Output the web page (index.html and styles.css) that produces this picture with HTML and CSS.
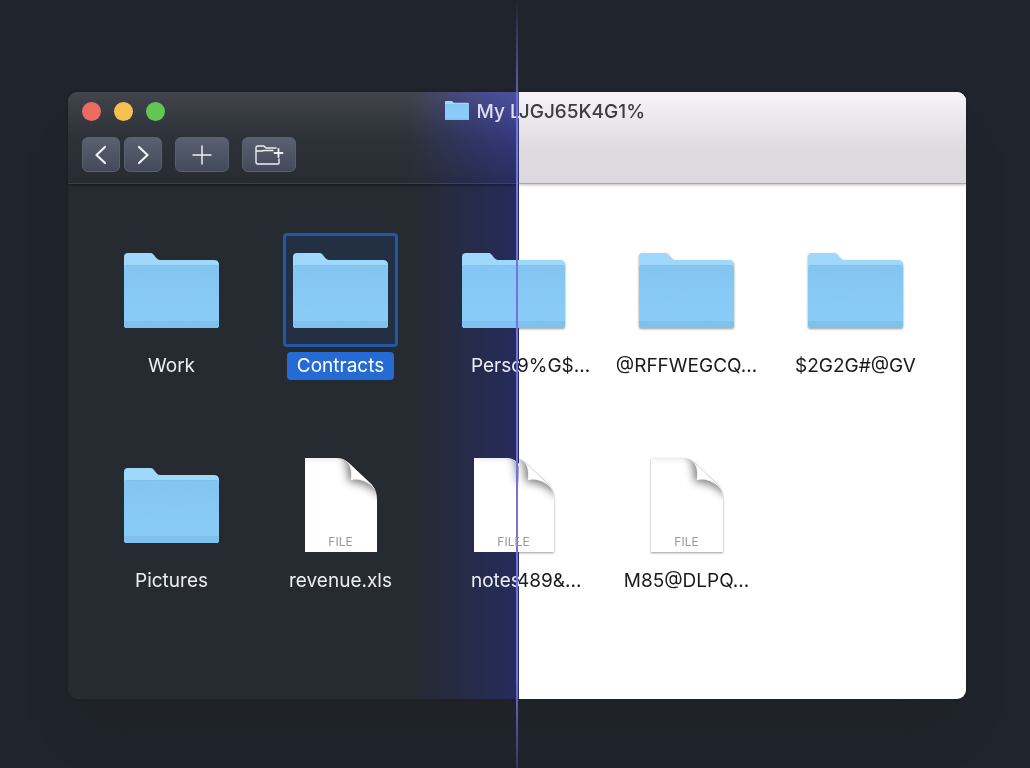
FILE: index.html
```html
<!DOCTYPE html>
<html lang="en">
<head>
<meta charset="utf-8">
<title>My Files</title>
<link rel="stylesheet" href="styles.css">
</head>
<body>
<svg class="defs" aria-hidden="true">
  <defs>
    <linearGradient id="front" x1="0" y1="0" x2="0" y2="1">
      <stop offset="0" stop-color="#83c5f1"/><stop offset="1" stop-color="#8acdf9"/>
    </linearGradient>
    <filter id="soft" x="-50%" y="-50%" width="200%" height="200%"><feGaussianBlur stdDeviation="4"/></filter>
    <filter id="paper"><feTurbulence type="fractalNoise" baseFrequency="0.12" numOctaves="2"/><feColorMatrix values="0 0 0 0 0.3  0 0 0 0 0.6  0 0 0 0 0.85  0.4 0 0 0 -0.08"/><feComposite in2="SourceGraphic" operator="in"/></filter>
    <clipPath id="sheet"><path d="M0 0H32C39 0 43 4 48 9L65 25C70 30 72 34 72 42V94H0Z"/></clipPath>
  </defs>
  <symbol id="folder" viewBox="0 0 95 75">
    <path d="M0 4Q0 0 4 0H27C30 0 32 7 36 7H90Q95 7 95 12V72Q95 75 92 75H3Q0 75 0 72Z" fill="#9fd8fb"/>
    <path d="M0 15Q0 12 3 12H92Q95 12 95 15V72Q95 75 92 75H3Q0 75 0 72Z" fill="url(#front)"/>
    <path d="M0 12H95V68H0Z" fill="#fff" filter="url(#paper)" opacity=".45"/>
    <path d="M0 68H95V72Q95 75 92 75H3Q0 75 0 72Z" fill="#7fc1ed"/>
    <path d="M1 12.500H94" stroke="#7fbde6" opacity=".4"/>
  </symbol>
  <symbol id="file" viewBox="0 0 72 94">
    <g clip-path="url(#sheet)">
      <path d="M0 0H72V94H0Z" fill="#fff"/>
      <path d="M0 -4H36C42 0 42 12 44 24C54 24 66 27 76 40V-8H0Z" fill="#555" opacity=".75" filter="url(#soft)"/>
      <path d="M34 0C45 2 47 11 46 22C57 20 66 26 71 33L74 0Z" fill="#f1f1f1"/>
      <path d="M46 7C47 12 47 17 46 22C52 20 58 21 63 24Z" fill="#fff"/>
    </g>
  </symbol>
</svg>
<main class="stage">
  <div class="window">
    <section class="pane dark">
      <header class="bar">
        <div class="titlebar">
          <div class="lights">
            <button class="light red" aria-label="Close"></button>
            <button class="light yellow" aria-label="Minimize"></button>
            <button class="light green" aria-label="Zoom"></button>
          </div>
          <div class="title"><svg class="mini"><use href="#folder"/></svg><span>My L</span></div>
        </div>
        <div class="tools">
          <button class="tool" aria-label="Back"><svg width="24" height="24" viewBox="0 0 24 24"><path d="M16 4L7.500 12L16 20" stroke-width="2.200"/></svg></button>
          <button class="tool" aria-label="Forward"><svg width="24" height="24" viewBox="0 0 24 24"><path d="M8 4L16.500 12L8 20" stroke-width="2.200"/></svg></button>
          <button class="tool wide" aria-label="Add"><svg width="24" height="24" viewBox="0 0 24 24"><path d="M3 12H21M12 3V21" stroke-width="1.500"/></svg></button>
          <button class="tool wide" aria-label="New folder"><svg width="30" height="24" viewBox="0 0 30 24"><path d="M22 5H12L10 3H4Q2 3 2 5V19Q2 21 4 21H24Q25 21 25 20V16M2 8H8L10 7.500H19" stroke-width="1.400"/><path d="M24.500 6V14M20.500 10H28.500" stroke-width="1.800"/></svg></button>
        </div>
      </header>
      <ul class="items">
        <li class="item"><div class="icon"><svg class="folder"><use href="#folder"/></svg></div><span class="label">Work</span></li>
        <li class="item selected"><div class="icon"><svg class="folder"><use href="#folder"/></svg></div><span class="label">Contracts</span></li>
        <li class="item cut"><div class="icon"><svg class="folder"><use href="#folder"/></svg></div><span class="label">Perso</span></li>
        <li class="item"><div class="icon"><svg class="folder"><use href="#folder"/></svg></div><span class="label">Pictures</span></li>
        <li class="item"><div class="icon"><svg class="file"><use href="#file"/></svg><span class="kind">FILE</span></div><span class="label">revenue.xls</span></li>
        <li class="item cut"><div class="icon"><svg class="file"><use href="#file"/></svg><span class="kind">FILE</span></div><span class="label">notes</span></li>
      </ul>
      <div class="glow"></div>
    </section>
    <section class="pane bright">
      <header class="bar">
        <div class="titlebar"><div class="title">JGJ65K4G1%</div></div>
      </header>
      <ul class="items">
        <li class="item cut"><div class="icon"><svg class="folder"><use href="#folder"/></svg></div><span class="label">9%G$...</span></li>
        <li class="item"><div class="icon"><svg class="folder"><use href="#folder"/></svg></div><span class="label">@RFFWEGCQ...</span></li>
        <li class="item"><div class="icon"><svg class="folder"><use href="#folder"/></svg></div><span class="label">$2G2G#@GV</span></li>
        <li class="item cut"><div class="icon"><svg class="file"><use href="#file"/></svg><span class="kind">FILE</span></div><span class="label">489&amp;...</span></li>
        <li class="item"><div class="icon"><svg class="file"><use href="#file"/></svg><span class="kind">FILE</span></div><span class="label">M85@DLPQ...</span></li>
      </ul>
    </section>
  </div>
  <div class="beam"></div>
</main>
</body>
</html>
```
FILE: styles.css
```css
* { box-sizing: border-box; }
body {
  margin: 0;
  background: #20242d;
  font-family: Inter, "Liberation Sans", sans-serif;
  font-size: 19px;
  line-height: 28px;
}
.defs { position: absolute; width: 0; height: 0; }
.stage {
  position: relative;
  min-height: 100vh;
  padding: 92px 64px 69px 68px;
  overflow: hidden;
}
.window {
  display: flex;
  border-radius: 9px;
  overflow: hidden;
  background: #262b31;
  box-shadow: 0 40px 40px -20px #1f2326, 0 0 3px #1a1d22;
}
.pane { position: relative; overflow: hidden; min-width: 0; }
.dark { flex: 0 0 50.2%; background: #262b31; color: #eceef2; }
.bright { flex: 1; background: #fff; color: #1b1b1d; }
.bar {
  height: 92px;
  padding: 4px 14px 0;
  border-bottom: 1px solid #3c424b;
  background: linear-gradient(#41454b, #2d3238 50%, #272c34);
  box-shadow: 0 1px 3px #12151a;
}
.bright .bar {
  padding-left: 0;
  border-bottom-color: #aaa8ad;
  background: linear-gradient(#f7f4f8, #e8e6e9 35%, #dddbdf 65%, #dcdade);
  box-shadow: 0 1px 3px #bbb;
}
.titlebar {
  display: flex;
  justify-content: space-between;
  align-items: center;
  height: 30px;
  margin-right: -14px;
}
.lights { display: flex; gap: 13px; }
.light {
  width: 19px;
  height: 19px;
  padding: 0;
  border: 0;
  border-radius: 50%;
}
.red { background: #ed6a5f; }
.yellow { background: #f6c150; }
.green { background: #62c655; }
.title { display: flex; align-items: center; gap: 8px; padding-top: 1px; font-weight: 500; white-space: nowrap; }
.dark .title { margin-right: -2px; color: #dcdcee; }
.bright .title { color: #3c3b3e; }
.mini { width: 24px; height: 19px; margin-bottom: 3px; }
.tools { display: flex; gap: 13px; margin-top: 11px; }
.tool {
  display: grid;
  place-items: center;
  width: 38px;
  height: 35px;
  padding: 0;
  border: 1px solid #596171;
  border-radius: 6px;
  background: linear-gradient(#596171, #434b5b);
}
.tool + .tool:not(.wide) { margin-left: -9px; }
.wide { width: 54px; }
.tool svg {
  fill: none;
  stroke: #eef0f4;
  stroke-linecap: round;
  stroke-linejoin: round;
}
.items {
  display: grid;
  grid-template-columns: repeat(3, 169px);
  row-gap: 68px;
  margin: 0;
  padding: 49px 0 104px 19px;
  list-style: none;
}
.bright .items { justify-content: end; padding: 49px 26px 104px 0; }
.item { display: flex; flex-direction: column; align-items: center; gap: 5px; }
.icon {
  display: grid;
  place-items: center;
  width: 115px;
  height: 114px;
  border: 3px solid transparent;
  border-radius: 4px;
}
.icon > * { grid-area: 1 / 1; }
.folder { width: 95px; height: 75px; }
.file { width: 72px; height: 94px; }
.bright .icon svg { filter: drop-shadow(0 1px 1px #0006); }
.kind { z-index: 1; align-self: end; margin-bottom: 9px; font-size: 12px; line-height: 16px; color: #9a9a9e; }
.label { height: 28px; padding: 0 10px; border-radius: 4px; white-space: nowrap; }
.selected .icon { border-color: #2159a8; background: #232f42; }
.selected .label { background: #266bd3; color: #fff; }
.dark .cut .label { align-self: start; padding: 0 0 0 46px; }
.bright .cut .label { align-self: start; padding: 0 0 0 84px; }
.glow {
  position: absolute;
  inset: 0 0 0 auto;
  width: 110px;
  background: linear-gradient(90deg, #000000, #000036);
  mix-blend-mode: screen;
}
.glow::before {
  content: "";
  display: block;
  height: 92px;
  background: linear-gradient(90deg, #0000, #10107a);
  mask-image: linear-gradient(#000, transparent);
}
.beam {
  position: absolute;
  top: 0;
  bottom: 0;
  left: calc(50% + 1px);
  width: 2px;
  background: linear-gradient(#7672dc00, #7672dc 16%, #7672dc 88%, #7672dc40);
}
```
